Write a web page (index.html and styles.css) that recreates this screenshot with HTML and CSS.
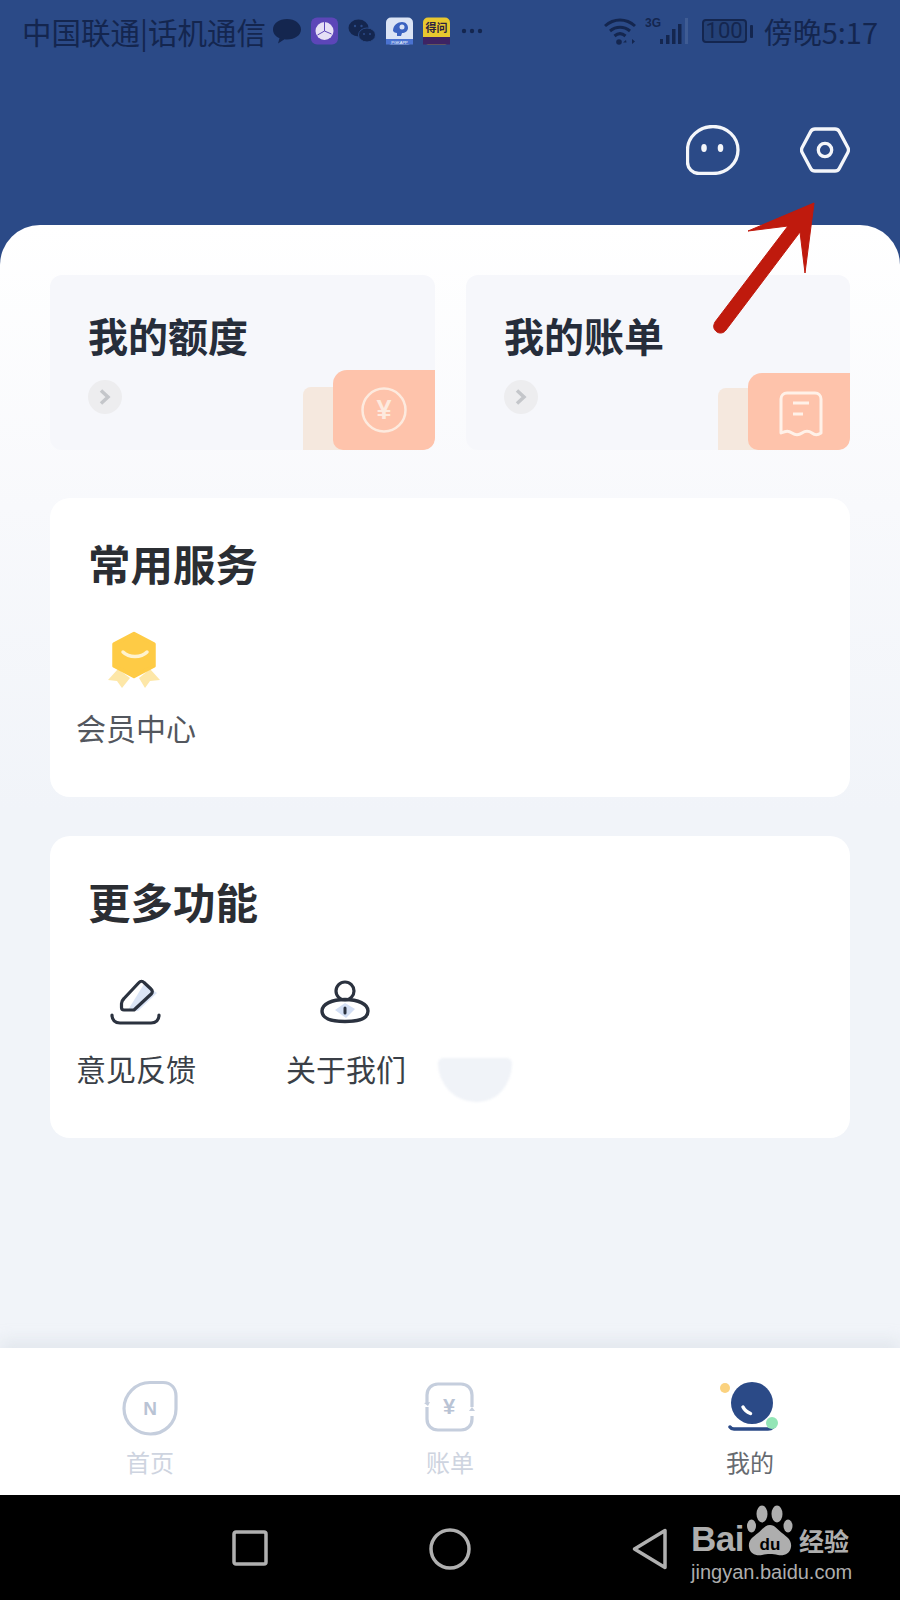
FILE: index.html
```html
<!DOCTYPE html>
<html lang="zh">
<head>
<meta charset="utf-8">
<title>我的</title>
<link rel="stylesheet" href="styles.css">
</head>
<body>
<div class="phone">
  <header class="top">
    <div class="status">
      <div class="status-left">
        <span class="carrier">中国联通|话机通信</span>
        <svg class="si w28" viewBox="0 0 28 28"><path d="M14 2C6 2 0 6.500 0 12.500c0 4 2.600 7 6.500 8.800L5 26.500l6.500-4.300c1 .2 1.800.2 2.500.2 8 0 14-4.400 14-10S22 2 14 2z" fill="#14264f"/></svg>
        <svg class="si w27" viewBox="0 0 27 28"><rect width="27" height="27" y="0.500" rx="6" fill="#5c46b8"/><circle cx="13.500" cy="14" r="9" fill="#e6e0f5"/><path d="M13.500 5v9l-7 4M13.500 14l7 3" stroke="#5c46b8" stroke-width="1" fill="none"/></svg>
        <svg class="si w28" viewBox="0 0 28 28"><ellipse cx="10.500" cy="11" rx="10" ry="8.500" fill="#14264f"/><ellipse cx="19" cy="18" rx="8.500" ry="7" fill="#14264f" stroke="#2b4a87" stroke-width="1"/><circle cx="7" cy="9" r="1.200" fill="#2b4a87"/><circle cx="13.500" cy="9" r="1.200" fill="#2b4a87"/><circle cx="16" cy="17" r="1" fill="#2b4a87"/><circle cx="22" cy="17" r="1" fill="#2b4a87"/></svg>
        <svg class="si w27" viewBox="0 0 27 28"><rect width="27" height="27" y="0.500" rx="5" fill="#dbe4f5"/><rect y="22" width="27" height="5.500" fill="#4a72d0"/><path d="M7 14c0-6 5-9 9-9s6 3 6 6-3 5-6 5l-1 3h-4v-3c-2 0-3-1-4-2z" fill="#3a62c0"/><circle cx="16" cy="10" r="2.500" fill="#dbe4f5"/><text x="13.500" y="26.500" class="tiny-light" text-anchor="middle">PGKAPP</text></svg>
        <svg class="si w27" viewBox="0 0 27 28"><rect width="27" height="27" y="0.500" rx="5" fill="#e8c72f"/><rect y="20" width="27" height="7.500" fill="#3d2363"/><text x="13.500" y="15" class="dewen" text-anchor="middle">得问</text></svg>
        <svg class="si w24" viewBox="0 0 24 28"><circle cx="4" cy="14" r="2.200" fill="#14264f"/><circle cx="12" cy="14" r="2.200" fill="#14264f"/><circle cx="20" cy="14" r="2.200" fill="#14264f"/></svg>
      </div>
      <div class="status-right">
        <svg class="wifi" width="34" height="28" viewBox="0 0 34 28"><path d="M2 9c9-8 21-8 30 0M7 14c6-5 14-5 20 0M11.500 19c3.500-3 7.500-3 11 0" fill="none" stroke="#14264f" stroke-width="3"/><circle cx="16" cy="25" r="2.800" fill="#14264f"/><path d="M23 23l-3 2.500h3.500zM29 22l3 2.500-3 2.500z" fill="#14264f"/></svg>
        <svg class="net" width="44" height="30" viewBox="0 0 44 30"><text x="0" y="11" class="net-t">3G</text><rect x="15" y="23" width="3" height="5" fill="#14264f"/><rect x="21" y="19" width="3.500" height="9" fill="#14264f"/><rect x="27" y="13" width="3.500" height="15" fill="#14264f"/><rect x="33" y="8" width="3.500" height="20" fill="#14264f"/><rect x="40" y="2" width="3" height="26" fill="#3f5c94"/></svg>
        <div class="battery"><span class="battery-body">100</span><i class="battery-nub"></i></div>
        <span class="clock">傍晚5:17</span>
      </div>
    </div>
    <div class="actions">
      <svg width="54" height="50" viewBox="0 0 54 50"><path d="M27 1.500C41 1.500 52 12 52 25S41 48.500 27 48.500H13C6.500 48.500 1.500 43.500 1.500 37V25C1.500 12 13 1.500 27 1.500z" fill="none" stroke="#f4f6fa" stroke-width="3.300"/><ellipse cx="18" cy="23" rx="2.800" ry="4" fill="#f4f6fa"/><ellipse cx="34.500" cy="23" rx="2.800" ry="4" fill="#f4f6fa"/></svg>
      <svg width="50" height="46" viewBox="0 0 50 46"><path d="M15 2h20c1.800 0 3.300.8 4.200 2.400l8.500 15.800c1 1.800 1 3.800 0 5.600l-8.500 15.800c-.9 1.600-2.400 2.400-4.200 2.400H15c-1.800 0-3.300-.8-4.200-2.400L2.300 25.800c-1-1.800-1-3.800 0-5.600L10.800 4.400C11.700 2.800 13.200 2 15 2z" fill="none" stroke="#f4f6fa" stroke-width="3.300"/><circle cx="25" cy="23" r="6.700" fill="none" stroke="#f4f6fa" stroke-width="3.300"/></svg>
    </div>
  </header>

  <main class="sheet">
    <section class="quick">
      <a class="quick-card">
        <h2 class="quick-title">我的额度</h2>
        <span class="chev"><svg width="16" height="18" viewBox="0 0 16 18"><path d="M4 2.500l7 6.500-7 6.500" fill="none" stroke="#c4c6ca" stroke-width="3.500"/></svg></span>
        <i class="deco-back"></i>
        <div class="deco-front">
          <svg width="48" height="48" viewBox="0 0 48 48"><circle cx="24" cy="24" r="21.500" fill="none" stroke="#fdeade" stroke-width="2.500"/><text x="24" y="33" class="yen" text-anchor="middle">¥</text></svg>
        </div>
      </a>
      <a class="quick-card">
        <h2 class="quick-title">我的账单</h2>
        <span class="chev"><svg width="16" height="18" viewBox="0 0 16 18"><path d="M4 2.500l7 6.500-7 6.500" fill="none" stroke="#c4c6ca" stroke-width="3.500"/></svg></span>
        <i class="deco-back deco-back-b"></i>
        <div class="deco-front deco-front-b">
          <svg width="44" height="46" viewBox="0 0 44 46"><path d="M2 8c0-3.500 2.500-6 6-6h28c3.500 0 6 2.500 6 6v34c-3.500 2.500-6 2.500-9 0-3.500-2.500-6.500-2.500-10 0s-6.500 2.500-10 0-5.500-2.500-11 0z" fill="none" stroke="#fff1e8" stroke-width="3" stroke-linejoin="round"/><path d="M14 12h16M14 23h10" stroke="#fff1e8" stroke-width="3" fill="none"/></svg>
        </div>
      </a>
    </section>

    <section class="panel services">
      <h2 class="panel-title">常用服务</h2>
      <div class="list">
        <a class="item">
          <svg width="60" height="60" viewBox="0 0 60 60"><path d="M2 50l10-11 12 9-8 10-5-7zM54 50L44 39l-11 9 6 10 5-7z" fill="#fde7a8"/><path d="M28 3.500l20 10.500v22L28 46.500 8 36V14z" fill="#fecb45" stroke="#fecb45" stroke-width="3.500" stroke-linejoin="round"/><path d="M17 22c6 6 18 6 24 0" fill="none" stroke="#fff3cf" stroke-width="3.500" stroke-linecap="round"/></svg>
          <span class="item-label">会员中心</span>
        </a>
      </div>
    </section>

    <section class="panel more">
      <h2 class="panel-title">更多功能</h2>
      <div class="list list-more">
        <a class="item">
          <svg width="60" height="60" viewBox="0 0 60 60"><path d="M38 13l13 9-19 18-10-1z" fill="#dbe5f6"/><path d="M18 27.500L33 11.500c1.500-1.700 3.500-1.700 5 0l7 6.500c1.700 1.500 1.700 3.500.2 5L28 39H18c-1.500 0-2.500-1-2.500-2.500v-4c0-2 1-3.500 2.500-5z" fill="none" stroke="#2b323f" stroke-width="3.200" stroke-linejoin="round"/><path d="M6 44c0 5 3 8 8 8h31c5 0 8-3 8-8" fill="none" stroke="#2b323f" stroke-width="3.200" stroke-linecap="round"/></svg>
          <span class="item-label">意见反馈</span>
        </a>
        <a class="item">
          <svg width="60" height="60" viewBox="0 0 60 60"><path d="M19 39l10-7 10 6-9 9z" fill="#d3dff4"/><circle cx="29" cy="20" r="9" fill="none" stroke="#2b323f" stroke-width="3.200"/><path d="M6 40c0-7 10-11.500 23-11.500S52 33 52 40s-8 10.500-23 10.500S6 47 6 40z" fill="none" stroke="#2b323f" stroke-width="3.400"/><path d="M29 37v5" stroke="#2b323f" stroke-width="3" stroke-linecap="round"/></svg>
          <span class="item-label">关于我们</span>
        </a>
      </div>
      <i class="smudge"></i>
    </section>
  </main>

  <nav class="tabs">
    <a class="tab">
      <svg width="60" height="60" viewBox="0 0 60 60"><path d="M30 4.500H43C51 4.500 56 10 56 18V31C56 45 44.500 56 30.500 56S4 45 4 30.500 16 4.500 30 4.500z" fill="none" stroke="#c5cedd" stroke-width="3.200"/><text x="30" y="37" class="tab-n" text-anchor="middle">N</text></svg>
      <span class="tab-label">首页</span>
    </a>
    <a class="tab">
      <svg width="60" height="60" viewBox="0 0 60 60"><path d="M7 25V17C7 10.500 11.500 6 18 6H41C47.500 6 52 10.500 52 17V29M52 38V41C52 47.500 47.500 52 41 52H18C11.500 52 7 47.500 7 41V29" fill="none" stroke="#c5cedd" stroke-width="3.200"/><path d="M4 25l6-1-2 4zM55 33l-6 0 3-4z" fill="#c5cedd"/><text x="29" y="36" class="tab-y" text-anchor="middle">¥</text></svg>
      <span class="tab-label">账单</span>
    </a>
    <a class="tab tab-on">
      <svg width="60" height="60" viewBox="0 0 60 60"><circle cx="32" cy="25" r="21" fill="#2b4a87"/><path d="M23 29c1.500 3 4 5 7.500 6.500" stroke="#fff" stroke-width="3.500" stroke-linecap="round" fill="none"/><circle cx="5" cy="10" r="5" fill="#fbd27f"/><path d="M10 49c1 1.500 2 2 4 2h34c2.500 0 4-1 5-2" fill="none" stroke="#2b4a87" stroke-width="3.400" stroke-linecap="round"/><circle cx="52" cy="45" r="6" fill="#93e5b6"/></svg>
      <span class="tab-label">我的</span>
    </a>
  </nav>

  <footer class="nav">
    <div class="nav-keys">
      <svg width="36" height="36" viewBox="0 0 36 36"><rect x="2" y="2" width="32" height="32" rx="2" fill="none" stroke="#b0b0b0" stroke-width="3.500"/></svg>
      <svg width="42" height="42" viewBox="0 0 42 42"><circle cx="21" cy="21" r="19" fill="none" stroke="#b0b0b0" stroke-width="3.500"/></svg>
      <svg width="36" height="42" viewBox="0 0 36 42"><path d="M33 2.500v37L2.500 21z" fill="none" stroke="#b0b0b0" stroke-width="3.500" stroke-linejoin="round"/></svg>
    </div>
    <div class="baidu">
      <div class="baidu-top">
        <span class="bai">Bai</span>
        <svg width="50" height="52" viewBox="0 0 50 52"><ellipse cx="6.500" cy="21" rx="4.500" ry="6.500" fill="#aeaeae"/><ellipse cx="17" cy="9" rx="5.500" ry="8.500" fill="#aeaeae"/><ellipse cx="32" cy="9" rx="5.500" ry="8.500" fill="#aeaeae"/><ellipse cx="43" cy="21" rx="4.500" ry="6.500" fill="#aeaeae"/><path d="M25 20c5 0 8 5 12 8 5 4 10 7 9 14-1 7-7 9-13 8-3-.6-5-1-8-1s-5 .4-8 1c-6 1-12-1-13-8-1-7 4-10 9-14 4-3 7-8 12-8z" fill="#aeaeae"/><text x="25" y="45" class="du" text-anchor="middle">du</text></svg>
        <span class="jy">经验</span>
      </div>
      <span class="baidu-url">jingyan.baidu.com</span>
    </div>
  </footer>

  <svg class="arrow" width="110" height="142" viewBox="0 0 110 142"><path d="M104 8L38 36 78 31 5 127C3 131 3 134 7 137 10 139 14 138 16 135L90 37 95 78z" fill="#bf1a0d" stroke="#bf1a0d" stroke-width="1" stroke-linejoin="round"/></svg>
</div>
</body>
</html>
```

FILE: styles.css
```css
* { box-sizing: border-box; }
html, body { margin: 0; padding: 0; }
body { font-family: "Noto Sans CJK SC", "Noto Sans", sans-serif; background: #000; }
svg { display: block; flex: none; }
h2 { margin: 0; }

.phone { position: relative; width: 900px; height: 1600px; overflow: hidden; display: flex; flex-direction: column; background: #2b4a87; }

.top { height: 225px; flex: none; }
.status { height: 62px; padding: 0 22px; display: flex; justify-content: space-between; align-items: center; color: #14264f; }
.status-left { display: flex; align-items: center; gap: 10px; }
.carrier { font-size: 29.5px; line-height: 40px; margin-right: -5px; width: 246px; white-space: nowrap; }
.si { height: 28px; }
.w28 { width: 28px; }
.w27 { width: 27px; }
.w24 { width: 24px; }
.tiny-light { font: 4px "Liberation Sans", sans-serif; fill: #fff; }
.dewen { font: 700 11px "Noto Sans CJK SC", sans-serif; fill: #2c2140; }
.status-right { display: flex; align-items: center; }
.wifi { margin-right: 8px; }
.net { margin-right: 13px; }
.net-t { font: 700 12px "Liberation Sans Narrow", "Liberation Sans", sans-serif; fill: #14264f; }
.battery { display: flex; align-items: center; gap: 3px; margin-right: 11px; }
.battery-body { width: 45px; height: 24px; border: 2px solid #14264f; border-radius: 4px; background: #244177; font: 22px/20px "Roboto", sans-serif; text-align: center; color: #14264f; }
.battery-nub { width: 3px; height: 13px; background: #14264f; border-radius: 1px; }
.clock { font-size: 29px; line-height: 40px; white-space: nowrap; }

.actions { display: flex; justify-content: flex-end; align-items: center; gap: 60px; padding: 63px 50px 0 0; }

.sheet { flex: 1; padding: 50px 50px 0; border-radius: 40px 40px 0 0; background: linear-gradient(180deg, #ffffff 0%, #f8f9fc 25%, #f1f4f9 52%, #f1f4f9 100%); }

.quick { display: grid; grid-template-columns: 385px 384px; column-gap: 31px; }
.quick-card { position: relative; height: 175px; padding: 38px 0 0 38px; background: #f6f7fb; border-radius: 12px; overflow: hidden; display: block; }
.quick-title { font-size: 40px; line-height: 44px; font-weight: 700; color: #262d3a; white-space: nowrap; }
.chev { display: flex; width: 34px; height: 34px; margin-top: 23px; border-radius: 50%; background: #ededef; align-items: center; justify-content: center; }
.yen { font: 700 27px "Liberation Sans", sans-serif; fill: #fdeade; }
.deco-back { position: absolute; left: 253px; right: 90px; bottom: 0; height: 63px; background: #f5e8de; border-radius: 8px 0 0 0; }
.deco-back-b { left: 252px; height: 62px; }
.deco-front { position: absolute; right: 0; bottom: 0; width: 102px; height: 80px; padding: 16px 0 0 27px; background: #fec3ab; border-radius: 14px 0 10px 10px; }
.deco-front-b { height: 77px; padding: 18px 0 0 31px; }

.panel { position: relative; margin-top: 39px; padding: 43px 0 0 26px; background: #fff; border-radius: 20px; height: 302px; }
.services { margin-top: 48px; height: 299px; }
.panel-title { padding-left: 12px; font-size: 42.5px; line-height: 44px; font-weight: 700; color: #2b2e33; white-space: nowrap; }
.list { display: flex; gap: 90px; margin-top: 45px; }
.list-more { margin-top: 48px; }
.item { width: 120px; display: flex; flex-direction: column; align-items: center; gap: 17px; }
.item-label { font-size: 30px; line-height: 40px; color: #53575e; white-space: nowrap; }
.more .item-label { color: #3a3f47; }
.smudge { position: absolute; left: 388px; top: 222px; width: 74px; height: 44px; background: #f0f3f8; border-radius: 6px 6px 52% 58% / 6px 6px 100% 100%; filter: blur(1px); }

.tabs { flex: none; height: 147px; padding-top: 30px; display: grid; grid-template-columns: repeat(3, 1fr); background: #fff; box-shadow: 0 -8px 14px rgba(200, 208, 218, .35); position: relative; }
.tab { display: flex; flex-direction: column; align-items: center; gap: 9px; }
.tab-label { font-size: 24px; line-height: 30px; color: #ced4e0; }
.tab-on .tab-label { color: #666a70; }
.tab-n { font: 700 19px "Liberation Sans", sans-serif; fill: #b9c3d4; }
.tab-y { font: 700 22px "Liberation Sans", sans-serif; fill: #b9c3d4; }

.nav { flex: none; height: 105px; background: #000; position: relative; }
.nav-keys { display: flex; align-items: center; height: 100%; padding: 0 0 0 232px; gap: 0; }
.nav-keys svg:nth-child(1) { margin: 0; }
.nav-keys svg:nth-child(2) { margin: 2px 0 0 161px; }
.nav-keys svg:nth-child(3) { margin: 2px 0 0 161px; }
.baidu { position: absolute; left: 691px; top: 10px; width: 160px; color: #aeaeae; }
.baidu-top { display: flex; align-items: flex-end; height: 52px; }
.bai { font: 700 35px/36px "Liberation Sans", sans-serif; letter-spacing: -.5px; width: 54px; }
.du { font: 700 17px "Liberation Sans", sans-serif; fill: #000; }
.jy { font-size: 25px; line-height: 34px; margin-left: 4px; white-space: nowrap; font-weight: 700; }
.baidu-url { display: block; margin-top: 3px; font: 20px/24px "Liberation Sans", sans-serif; white-space: nowrap; }

.arrow { position: absolute; left: 710px; top: 195px; }
```
